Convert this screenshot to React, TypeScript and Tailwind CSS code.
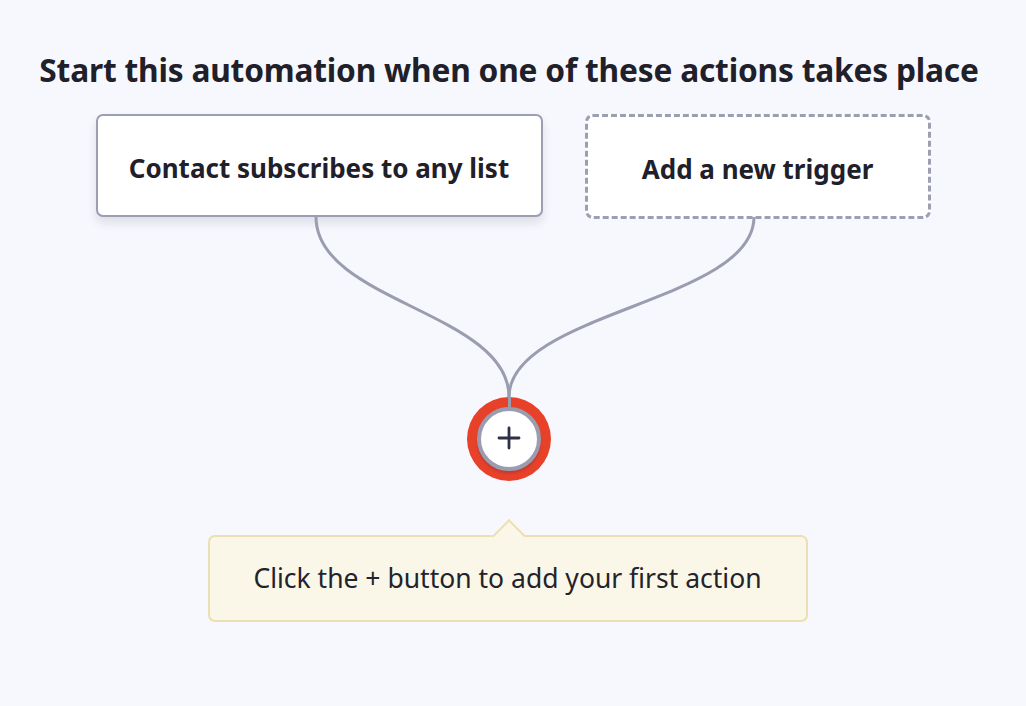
import React from "react";

export default function App() {
  return (
    <div className="w-[1026px] h-[706px] bg-[#f7f8fd] flex flex-col items-center font-['Noto_Sans',sans-serif] text-[#1f2029] overflow-hidden">
      <h1 className="mt-[50px] text-[31.7px] leading-[40px] font-bold tracking-[-0.2px] mr-[8px]">
        Start this automation when one of these actions takes place
      </h1>
      <div className="mt-[24px] flex gap-[42px] items-start">
        <div className="w-[447px] h-[103px] rounded-[7px] border-2 border-[#9c9eb1] bg-white shadow-[0_6px_10px_rgba(40,44,70,0.12)] flex items-center justify-center pt-[5px]">
          <span className="text-[26px] font-bold">Contact subscribes to any list</span>
        </div>
        <div className="w-[346px] h-[105px] rounded-[8px] border-[3px] border-dashed border-[#9c9eb1] bg-white flex items-center justify-center pt-[6px]">
          <span className="text-[26px] font-bold">Add a new trigger</span>
        </div>
      </div>
      <svg width="1026" height="180" viewBox="0 0 1026 180" className="block -mt-[2px]" fill="none">
        <path d="M316 0 C316 85, 509 95, 509 180" stroke="#9a9db0" strokeWidth="3" strokeLinecap="round" />
        <path d="M754 0 C754 85, 509 95, 509 180" stroke="#9a9db0" strokeWidth="3" strokeLinecap="round" />
      </svg>
      <div className="mr-[8px] relative w-[84px] h-[84px] rounded-full bg-[#e8412a] flex items-center justify-center">
        <div className="absolute top-0 left-[40.5px] w-[3px] h-[10px] bg-[#9a9db0]" />
        <div className="w-[64px] h-[64px] rounded-full border-[4px] border-[#9a9db0] bg-white shadow-[0_3px_2px_rgba(40,44,70,0.18)] flex items-center justify-center">
          <svg width="24" height="24" viewBox="0 0 24 24" className="-mt-[2px]">
            <path d="M12 2 V22 M2 12 H22" stroke="#2d3047" strokeWidth="2.8" strokeLinecap="round" />
          </svg>
        </div>
      </div>
      <div className="mt-[54px] mr-[11px] relative w-[600px] h-[87px] rounded-[7px] border-2 border-[#ecdfb2] bg-[#faf7e8] flex items-center justify-center">
        <div className="absolute -top-[13px] left-[287px] w-[24px] h-[24px] rotate-45 border-t-2 border-l-2 border-[#ecdfb2] bg-[#faf7e8]" />
        <span className="relative text-[26.5px] text-[#22232b]">Click the + button to add your first action</span>
      </div>
    </div>
  );
}
